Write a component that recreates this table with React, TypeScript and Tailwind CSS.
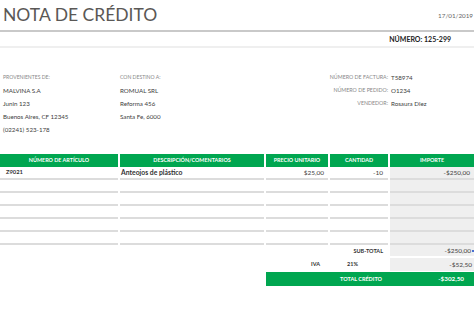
import React from "react";

interface Row {
  item: string;
  desc: string;
  price: string;
  qty: string;
  amount: string;
}

const rows: Row[] = [
  { item: "Z9021", desc: "Anteojos de plástico", price: "$25,00", qty: "-10", amount: "-$250,00" },
  { item: "", desc: "", price: "", qty: "", amount: "" },
  { item: "", desc: "", price: "", qty: "", amount: "" },
  { item: "", desc: "", price: "", qty: "", amount: "" },
  { item: "", desc: "", price: "", qty: "", amount: "" },
  { item: "", desc: "", price: "", qty: "", amount: "" },
];

const headers = ["NÚMERO DE ARTÍCULO", "DESCRIPCIÓN/COMENTARIOS", "PRECIO UNITARIO", "CANTIDAD", "IMPORTE"];

const grid = "grid grid-cols-[118px_144px_62px_58px_1fr] gap-x-[2px]";

const App: React.FC = () => {
  return (
    <div className="w-[474px] h-[313px] bg-white overflow-hidden text-[#404040] font-['Lato','Liberation_Sans',sans-serif]">
      {/* title */}
      <div className="flex items-start justify-between h-[32px] pl-[3px] border-b-2 border-[#c9c9c9]">
        <h1 className="text-[17.5px] font-normal leading-none mt-[6px] text-[#5a5856]">NOTA DE CRÉDITO</h1>
        <span className="text-[6.3px] mt-[11px] mr-[1px] text-[#666]">17/01/2019</span>
      </div>
      <div className="flex justify-end items-center h-[16px] pr-[23px] border-b-2 border-[#efefef]">
        <span className="text-[7px] font-bold text-[#222]">NÚMERO: 125-299</span>
      </div>

      {/* parties */}
      <div className="flex pt-[23px] h-[106px] text-[6.2px] leading-[13px]">
        <div className="w-[117px] pl-[3px]">
          <div className="text-[#888] text-[5.1px]">PROVENIENTES DE:</div>
          <div>MALVINA S.A</div>
          <div>Junin 123</div>
          <div>Buenos Aires, CF 12345</div>
          <div>(02241) 523-178</div>
        </div>
        <div className="w-[150px] pl-[3px]">
          <div className="text-[#888] text-[5.1px]">CON DESTINO A:</div>
          <div>ROMUAL SRL</div>
          <div>Reforma 456</div>
          <div>Santa Fe, 6000</div>
        </div>
        <div className="grid grid-cols-[121px_auto] gap-x-[3px] content-start">
          <div className="text-right text-[#888] text-[5.3px]">NÚMERO DE FACTURA:</div>
          <div>T58974</div>
          <div className="text-right text-[#888] text-[5.3px]">NÚMERO DE PEDIDO:</div>
          <div>O1234</div>
          <div className="text-right text-[#888] text-[5.3px]">VENDEDOR:</div>
          <div>Rosaura Diez</div>
        </div>
      </div>

      {/* table */}
      <div className="text-[6.5px]">
        <div className={`${grid} h-[13px] text-[5.4px]`}>
          {headers.map((h) => (
            <div key={h} className="bg-[#00a650] text-white font-bold flex items-center justify-center">
              {h}
            </div>
          ))}
        </div>
        {rows.map((r, i) => (
          <div key={i} className={`${grid} h-[13px]`}>
            <div className="border-b-2 border-[#dcdcdc] pl-[6px] flex items-center font-bold text-[#333] text-[5.8px]">{r.item}</div>
            <div className="border-b-2 border-[#dcdcdc] pl-[1px] flex items-center font-bold text-[#333] text-[6.8px]">{r.desc}</div>
            <div className="border-b-2 border-[#dcdcdc] pr-[4px] flex items-center justify-end">{r.price}</div>
            <div className="border-b-2 border-[#dcdcdc] pr-[5px] flex items-center justify-end">{r.qty}</div>
            <div className="border-b-2 border-[#dcdcdc] bg-[#efefef] pr-[4px] flex items-center justify-end">{r.amount}</div>
          </div>
        ))}
        <div className={`${grid} h-[13px]`}>
          <div />
          <div />
          <div />
          <div className="flex items-center justify-end pr-[5px] font-bold text-[#333] text-[5.5px]">SUB-TOTAL</div>
          <div className="relative bg-[#efefef] border-b-2 border-white pr-[3px] flex items-center justify-end">
            -$250,00
            <span className="absolute right-0 top-[5px] w-[2px] h-[2px] bg-[#4a6fd0]" />
          </div>
        </div>
        <div className={`${grid} h-[13px] text-[5.5px]`}>
          <div />
          <div />
          <div className="flex items-center justify-end pr-[8px] font-bold text-[#333]">IVA</div>
          <div className="flex items-center pl-[17px] font-bold text-[#333]">21%</div>
          <div className="bg-[#efefef] pr-[2px] flex items-center justify-end text-[6.5px]">-$52,50</div>
        </div>
        <div className="grid grid-cols-[118px_144px_1fr] gap-x-[2px] h-[14px] mt-px">
          <div />
          <div />
          <div className="bg-[#00a650] text-white font-bold grid grid-cols-[120px_1fr] gap-x-[2px] text-[5.5px]">
            <div className="flex items-center justify-end pr-[4px]">TOTAL CRÉDITO</div>
            <div className="flex items-center justify-end pr-[10px] text-[6.3px]">-$302,50</div>
          </div>
        </div>
      </div>
    </div>
  );
};

export default App;
